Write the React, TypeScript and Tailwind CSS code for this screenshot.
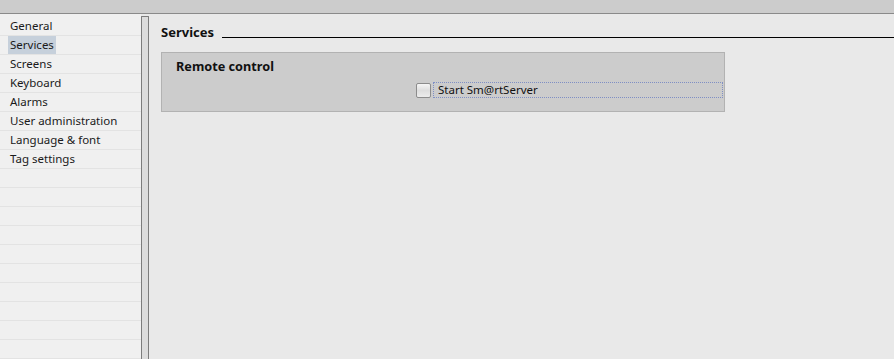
import React from "react";

const items = [
  "General",
  "Services",
  "Screens",
  "Keyboard",
  "Alarms",
  "User administration",
  "Language & font",
  "Tag settings",
];

export default function App() {
  const rows = Array.from({ length: 18 }, (_, i) => items[i] ?? "");
  return (
    <div
      className="w-[894px] h-[359px] flex flex-col overflow-hidden bg-[#e9e9e9] text-[#1a1a1a]"
      style={{ fontFamily: '"Noto Sans", "DejaVu Sans", sans-serif' }}
    >
      <div className="h-[14px] shrink-0 bg-[#cccccc] border-b border-[#8a8a8a]" />
      <div className="flex flex-1 min-h-0">
        <div className="w-[141px] shrink-0 bg-[#f0f0f0] pt-[3px] overflow-hidden">
          {rows.map((label, i) => (
            <div
              key={i}
              className="h-[19px] border-b border-[#e3e3e3] pl-[8px] flex items-center text-[11.5px] leading-[18px]"
            >
              {label && (
                <span
                  className={
                    "px-[2px] h-[18px] " +
                    (label === "Services" ? "bg-[#c6d0db]" : "")
                  }
                >
                  {label}
                </span>
              )}
            </div>
          ))}
        </div>
        <div className="w-[8px] shrink-0 mt-[2px] border border-b-0 border-[#7c7c7c] bg-[#dcdcdc] rounded-t-[1px]" />
        <div className="flex-1 min-w-0 pl-[12px]">
          <div className="flex items-start mt-[10px] h-[16px]">
            <span className="text-[13px] leading-[16px] font-bold text-[#111]">
              Services
            </span>
            <div className="flex-1 h-px bg-black mt-[13px] ml-[8px]" />
          </div>
          <div className="mt-[12px] w-[564px] border border-[#b2b2b2] bg-[#cccccc] pt-[5px] pb-[13px]">
            <div className="pl-[14px] text-[12.7px] leading-[16px] font-bold text-[#111]">
              Remote control
            </div>
            <div className="mt-[8px] ml-[254px] flex items-center h-[16px]">
              <div className="w-[15px] h-[15px] rounded-[2px] border border-[#8c8c8c] bg-gradient-to-b from-[#f6f6f6] via-[#dedede] to-[#ececec]" />
              <div className="ml-[2px] w-[290px] h-[16px] border border-dotted border-[#7f8fc4] pl-[4px] text-[11.5px] leading-[14px] text-[#111]">
                Start Sm@rtServer
              </div>
            </div>
          </div>
        </div>
      </div>
    </div>
  );
}
